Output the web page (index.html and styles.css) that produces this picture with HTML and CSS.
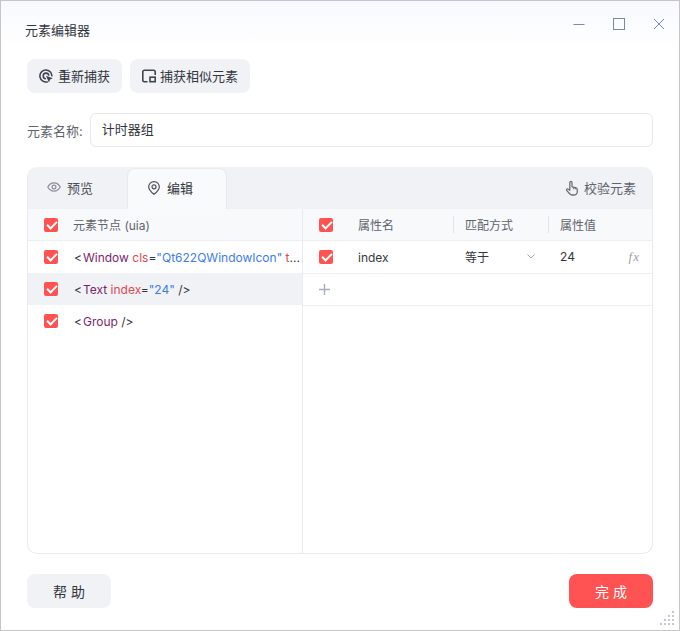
FILE: index.html
```html
<!DOCTYPE html>
<html lang="zh-CN">
<head>
    <meta charset="UTF-8">
    <meta name="viewport" content="width=device-width, initial-scale=1.0">
    <title>元素编辑器</title>
    <link rel="stylesheet" href="styles.css">
</head>
<body>
    <div class="window">
        <div class="titlebar">
            <span class="title">元素编辑器</span>
            <div class="win-controls">
                <svg width="12" height="12" viewBox="0 0 12 12"><path d="M0.500 6.500h11" stroke="#7b8aa0" fill="none"/></svg>
                <svg width="12" height="12" viewBox="0 0 12 12"><rect x="0.500" y="0.500" width="11" height="11" stroke="#7b8aa0" fill="none"/></svg>
                <svg width="12" height="12" viewBox="0 0 12 12"><path d="M1 1l10 10M11 1L1 11" stroke="#7b8aa0" fill="none"/></svg>
            </div>
        </div>

        <div class="toolbar">
            <button class="btn">
                <svg width="14" height="14" viewBox="0 0 14 14" fill="none" stroke="#3f4450" stroke-width="1.600"><path d="M8.800 12.700A6 6 0 1 1 12.900 7.400"/><path d="M7 9.700A2.800 2.800 0 1 1 9.800 6.700"/><path d="M7 6.800l6.800 2.500-2.700 1.200-1.200 2.900z" fill="#3f4450" stroke="none"/></svg>
                重新捕获
            </button>
            <button class="btn">
                <svg width="14" height="14" viewBox="0 0 14 14" fill="none" stroke="#3f4450" stroke-width="1.600"><path d="M5.500 12.700H2.500a1.700 1.700 0 0 1-1.700-1.700V3a1.700 1.700 0 0 1 1.700-1.700h9A1.700 1.700 0 0 1 13.200 3v3"/><rect x="8" y="8.200" width="5.200" height="4.500"/></svg>
                捕获相似元素
            </button>
        </div>

        <div class="name-row">
            <label class="name-label">元素名称:</label>
            <div class="name-input">计时器组</div>
        </div>

        <div class="panel">
            <div class="tabs">
                <div class="tab">
                    <svg width="14" height="14" viewBox="0 0 14 14" fill="none" stroke="#8a8f99" stroke-width="1.200"><path d="M0.800 7C2.300 4.200 4.400 2.900 7 2.900S11.700 4.200 13.200 7C11.700 9.800 9.600 11.100 7 11.100S2.300 9.800 0.800 7z"/><circle cx="7" cy="7" r="1.900"/></svg>
                    预览
                </div>
                <div class="tab active">
                    <svg width="14" height="14" viewBox="0 0 14 14" fill="none" stroke="#4a4f5a" stroke-width="1.200"><path d="M7 13.300C4 10.800 1.700 8.500 1.700 5.900A5.300 5.300 0 0 1 12.300 5.900C12.300 8.500 10 10.800 7 13.300z"/><circle cx="7" cy="5.800" r="2"/></svg>
                    编辑
                </div>
                <div class="verify">
                    <svg width="16" height="16" viewBox="0 0 16 16" fill="none" stroke="#6b7078" stroke-width="1.300" stroke-linejoin="round"><path d="M5.800 9.200V2.500a1.100 1.100 0 0 1 2.200 0v4.300l3.600 0.800c1.100 0.300 1.700 1 1.700 2.100v1.800c0 2-1.300 3.500-3.500 3.500H8.300c-1.300 0-2.100-0.500-2.900-1.500L2.700 10.400c-0.500-0.700 0-1.600 0.800-1.600 0.500 0 1 0.200 2.300 1.400z"/><path d="M9.800 7.200v2M11.700 7.700v1.600"/></svg>
                    校验元素
                </div>
            </div>

            <div class="columns">
                <div class="nodes">
                    <div class="row head">
                        <span class="check"></span>
                        <span class="head-text">元素节点 (uia)</span>
                    </div>
                    <div class="row">
                        <span class="check"></span>
                        <span class="code"><i>&lt;</i><b>Window</b> <em>cls</em><i>=</i><u>"Qt622QWindowIcon"</u> <em>t</em><i>...</i></span>
                    </div>
                    <div class="row selected">
                        <span class="check"></span>
                        <span class="code"><i>&lt;</i><b>Text</b> <em>index</em><i>=</i><u>"24"</u> <i>/&gt;</i></span>
                    </div>
                    <div class="row">
                        <span class="check"></span>
                        <span class="code"><i>&lt;</i><b>Group</b> <i>/&gt;</i></span>
                    </div>
                </div>

                <div class="attrs">
                    <div class="attr-row head">
                        <span class="check"></span>
                        <span class="head-text">属性名</span>
                        <span class="head-text sep">匹配方式</span>
                        <span class="head-text sep">属性值</span>
                    </div>
                    <div class="attr-row line">
                        <span class="check"></span>
                        <span>index</span>
                        <span class="match">等于
                            <svg width="8" height="5" viewBox="0 0 8 5"><path d="M0.500 0.500L4 4l3.500-3.500" stroke="#a4a9b2" fill="none"/></svg>
                        </span>
                        <span class="value">24<span class="fx">fx</span></span>
                    </div>
                    <div class="attr-row line">
                        <svg class="plus" width="11" height="11" viewBox="0 0 11 11"><path d="M5.500 0v11M0 5.500h11" stroke="#a9aebc" stroke-width="1.400" fill="none"/></svg>
                    </div>
                </div>
            </div>
        </div>

        <div class="footer">
            <button class="btn-footer">帮 助</button>
            <button class="btn-footer primary">完 成</button>
        </div>

        <svg class="grip" width="14" height="14" viewBox="0 0 14 14" fill="#c3c8d4"><rect x="12" y="0" width="2" height="2"/><rect x="8" y="4" width="2" height="2"/><rect x="12" y="4" width="2" height="2"/><rect x="4" y="8" width="2" height="2"/><rect x="8" y="8" width="2" height="2"/><rect x="12" y="8" width="2" height="2"/><rect x="0" y="12" width="2" height="2"/><rect x="4" y="12" width="2" height="2"/><rect x="8" y="12" width="2" height="2"/><rect x="12" y="12" width="2" height="2"/></svg>
    </div>
</body>
</html>
```

FILE: styles.css
```css
* {
    box-sizing: border-box;
}
body {
    margin: 0;
    font-family: Inter, "Noto Sans CJK SC", sans-serif;
    font-size: 13px;
    color: #33363d;
    background: #fff;
}
.window {
    position: relative;
    width: 680px;
    height: 631px;
    border: 1px solid #c6c6c6;
    padding: 0 26px;
    background: linear-gradient(#f7f9ff 0, #fff 46px);
}
.titlebar {
    display: flex;
    justify-content: space-between;
    height: 45px;
}
.title {
    margin-left: -2px;
    padding-top: 19px;
}
.win-controls {
    display: flex;
    gap: 28px;
    margin-right: -12px;
    padding-top: 17px;
}
.toolbar {
    display: flex;
    gap: 8px;
    margin-top: 13px;
}
.btn {
    display: flex;
    align-items: center;
    gap: 5px;
    height: 34px;
    padding: 0 12px 2px;
    border: none;
    border-radius: 8px;
    background: #f0f2f6;
    color: #33363d;
    font: inherit;
}
.btn + .btn {
    gap: 4px;
}
.btn svg {
    margin-top: 2px;
}
.name-row {
    display: flex;
    align-items: center;
    gap: 7px;
    margin-top: 20px;
}
.name-label {
    color: #5f636c;
    white-space: nowrap;
}
.name-input {
    flex: 1;
    height: 34px;
    line-height: 31px;
    padding: 0 11px;
    border: 1px solid #e6e8ed;
    border-radius: 6px;
    background: #fff;
}
.panel {
    display: flex;
    flex-direction: column;
    height: 387px;
    margin-top: 20px;
    border: 1px solid #e8eaef;
    border-top: none;
    border-radius: 10px;
    overflow: hidden;
}
.tabs {
    display: flex;
    align-items: flex-end;
    height: 42px;
    margin: 0 -1px;
    background: #f0f2f6;
}
.tab {
    display: flex;
    align-items: center;
    gap: 6px;
    width: 100px;
    height: 41px;
    padding: 0 0 3px 20px;
    color: #4a4e57;
}
.tab.active {
    padding-left: 19px;
    border: 1px solid #e8eaef;
    border-bottom: none;
    border-radius: 8px 8px 0 0;
    background: #f9fafc;
    color: #33363d;
}
.verify {
    display: flex;
    align-items: center;
    gap: 4px;
    height: 41px;
    margin-left: auto;
    padding: 0 17px 2px 0;
    color: #5f636c;
}
.columns {
    display: flex;
    flex: 1;
}
.nodes {
    width: 275px;
    border-right: 1px solid #e8eaef;
}
.attrs {
    flex: 1;
}
.row {
    display: flex;
    align-items: center;
    gap: 16px;
    height: 32px;
    padding-left: 16px;
    font-size: 12px;
    white-space: nowrap;
}
.head {
    background: #f8f9fb;
    border-bottom: 1px solid #eceef2;
    font-size: 12px;
}
.row.head {
    gap: 15px;
}
.row.selected {
    background: #f0f2f6;
}
.head-text {
    color: #5f636c;
}
.check {
    position: relative;
    flex: none;
    width: 14px;
    height: 14px;
    border-radius: 2px;
    background: #ff5252;
}
.check::after {
    content: "";
    position: absolute;
    left: 3px;
    top: 3px;
    width: 8px;
    height: 4px;
    border-left: 2px solid #fff;
    border-bottom: 2px solid #fff;
    transform: rotate(-45deg);
}
.code {
    overflow: hidden;
}
.code i {
    font-style: normal;
    color: #33363d;
}
.code b {
    margin-left: 1px;
    font-weight: normal;
    color: #7a1f6e;
}
.code em {
    font-style: normal;
    color: #e0474c;
}
.code u {
    text-decoration: none;
    color: #3d7bf0;
}
.attr-row {
    display: grid;
    grid-template-columns: 39px 107px 95px 1fr;
    align-items: center;
    height: 32px;
    padding-left: 16px;
    font-size: 12px;
}
.attr-row.line {
    border-bottom: 1px solid #eceef2;
}
.head + .line {
    height: 33px;
}
.sep {
    position: relative;
}
.sep::before {
    content: "";
    position: absolute;
    left: -12px;
    top: 0;
    bottom: 0;
    width: 1px;
    background: #e2e4ea;
}
.match {
    display: flex;
    align-items: center;
    justify-content: space-between;
    padding: 0 25px 1px 0;
}
.value {
    display: flex;
    justify-content: space-between;
    padding-right: 12px;
}
.fx {
    color: #9a9ea6;
    font-family: "Liberation Serif", serif;
    font-size: 13px;
    font-style: italic;
    letter-spacing: 1px;
}
.footer {
    display: flex;
    justify-content: space-between;
    margin-top: 20px;
}
.btn-footer {
    width: 84px;
    height: 34px;
    padding-bottom: 2px;
    border: none;
    border-radius: 8px;
    background: #f0f2f6;
    color: #33363d;
    font: inherit;
    font-size: 14px;
}
.btn-footer.primary {
    background: #ff5252;
    color: #fff;
}
.grip {
    position: absolute;
    right: 5px;
    bottom: 5px;
}
```
